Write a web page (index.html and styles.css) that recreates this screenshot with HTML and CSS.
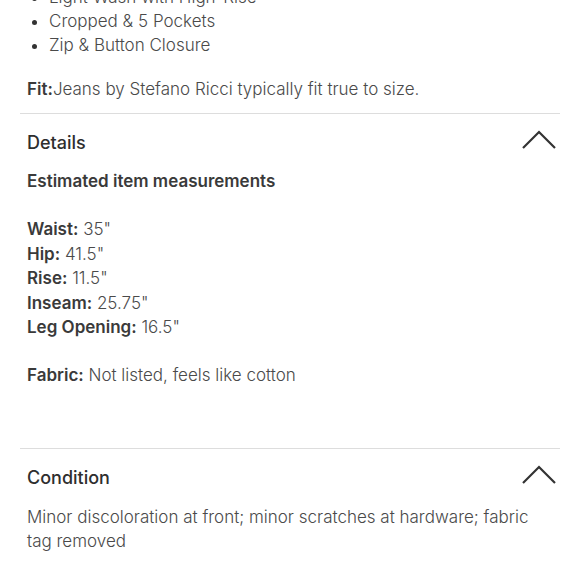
FILE: index.html
```html
<!DOCTYPE html>
<html>
<head>
<meta charset="utf-8">
<link rel="stylesheet" href="styles.css">
</head>
<body>
<div class="page">
  <ul class="features">
    <li>Light Wash with High-Rise</li>
    <li>Cropped &amp; 5 Pockets</li>
    <li>Zip &amp; Button Closure</li>
  </ul>
  <p class="fit"><b>Fit:</b>Jeans by Stefano Ricci typically fit true to size.</p>

  <section class="section details">
    <div class="section-head">
      <h2>Details</h2>
      <svg class="chev" width="36" height="20" viewBox="0 0 36 20"><polyline points="2,18 18,2 34,18" fill="none" stroke="#333" stroke-width="2.2"/></svg>
    </div>
    <p class="sub">Estimated item measurements</p>
    <div class="measures">
      <div><b>Waist:</b> 35"</div>
      <div><b>Hip:</b> 41.5"</div>
      <div><b>Rise:</b> 11.5"</div>
      <div><b>Inseam:</b> 25.75"</div>
      <div><b>Leg Opening:</b> 16.5"</div>
    </div>
    <p class="fabric"><b>Fabric:</b> Not listed, feels like cotton</p>
  </section>

  <section class="section condition">
    <div class="section-head">
      <h2>Condition</h2>
      <svg class="chev" width="36" height="20" viewBox="0 0 36 20"><polyline points="2,18 18,2 34,18" fill="none" stroke="#333" stroke-width="2.2"/></svg>
    </div>
    <p class="cond-text">Minor discoloration at front; minor scratches at hardware; fabric tag removed</p>
  </section>
</div>
</body>
</html>
```
FILE: styles.css
```css
html, body {
  margin: 0;
  padding: 0;
  background: #fff;
}
body {
  font-family: Inter, "Liberation Sans", sans-serif;
  font-size: 17px;
  font-weight: 300;
  letter-spacing: 0;
  color: #4a4a4a;
  overflow: hidden;
}
b {
  font-weight: 600;
  color: #3a3a3a;
}
.page {
  padding: 0 20px;
  margin-top: -15px;
}
.features {
  margin: 0;
  padding: 0 0 0 29px;
  line-height: 24px;
}
.features li::marker {
  color: #333;
}
.fit {
  margin: 20px 0 0 7px;
  line-height: 24px;
}
.section {
  border-top: 1px solid #ddd;
  padding: 0 0 0 7px;
}
.details {
  margin-top: 12px;
}
.section-head {
  display: flex;
  justify-content: space-between;
  align-items: center;
  padding-top: 16px;
  padding-right: 3px;
}
.section-head h2 {
  margin: 0;
  font-size: 18px;
  font-weight: 500;
  color: #2e2e2e;
  line-height: 24px;
}
.chev {
  margin-bottom: 6px;
}
.sub {
  margin: 13px 0 0;
  line-height: 24px;
  font-weight: 600;
  color: #3a3a3a;
}
.measures {
  margin-top: 24px;
  line-height: 24.5px;
}
.fabric {
  margin: 23px 0 0;
  line-height: 24px;
  padding-bottom: 61px;
}
.cond-text {
  margin: 14px 0 0;
  line-height: 24.5px;
  padding-right: 18px;
}
```
